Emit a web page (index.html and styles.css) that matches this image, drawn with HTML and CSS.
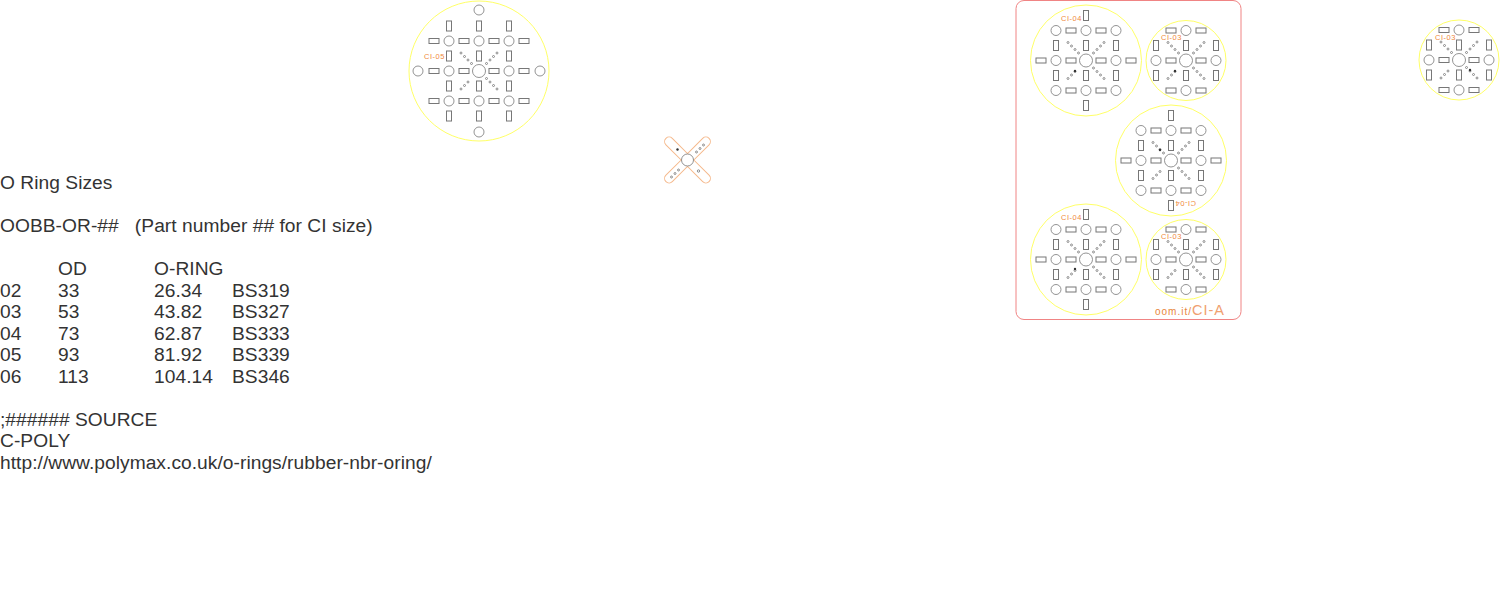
FILE: index.html
```html
<!DOCTYPE html>
<html lang="en">
<head>
  <meta charset="UTF-8">
  <title>O Ring Sizes</title>
  <link rel="stylesheet" href="styles.css">
</head>
<body>
  <svg class="sheet" width="1500" height="597" viewBox="0 0 1500 597" aria-hidden="true">
    <defs>
      <rect id="sh" class="slot" x="-5" y="-2.5" width="10" height="5"/>
      <rect id="sv" class="slot" x="-2.5" y="-5" width="5" height="10"/>
      <circle id="hole" class="hole" r="5"/>

      <!-- small screw holes along the diagonals -->
      <g id="spokes">
        <circle class="pin" cx="-18" cy="-18" r="1"/><circle class="pin" cx="-14.5" cy="-14.5" r="1"/><circle class="pin" cx="-11" cy="-11" r="1"/><circle class="pin" cx="-7.5" cy="-7.5" r="1"/>
        <circle class="pin" cx="18" cy="-18" r="1"/><circle class="pin" cx="14.5" cy="-14.5" r="1"/><circle class="pin" cx="11" cy="-11" r="1"/><circle class="pin" cx="7.5" cy="-7.5" r="1"/>
        <circle class="pin" cx="-18" cy="18" r="1"/><circle class="pin" cx="-14.5" cy="14.5" r="1"/><circle class="pin" cx="-11" cy="11" r="1"/>
        <circle class="pin" cx="18" cy="18" r="1"/><circle class="pin" cx="14.5" cy="14.5" r="1"/><circle class="pin" cx="11" cy="11" r="1"/><circle class="pin" cx="7.5" cy="7.5" r="1"/>
      </g>

      <g id="ci03">
        <use href="#spokes"/>
        <circle class="hole" r="6.5"/>
        <use href="#hole" x="-30"/><use href="#hole" x="30"/><use href="#hole" y="-30"/><use href="#hole" y="30"/>
        <use href="#sh" x="-15"/><use href="#sh" x="15"/>
        <use href="#sh" x="-15" y="-30"/><use href="#sh" x="15" y="-30"/>
        <use href="#sh" x="-15" y="30"/><use href="#sh" x="15" y="30"/>
        <use href="#sv" y="-15"/><use href="#sv" y="15"/>
        <use href="#sv" x="-30" y="-15"/><use href="#sv" x="-30" y="15"/>
        <use href="#sv" x="30" y="-15"/><use href="#sv" x="30" y="15"/>
      </g>

      <g id="ci04">
        <use href="#ci03"/>
        <use href="#hole" x="-30" y="-30"/><use href="#hole" x="30" y="-30"/>
        <use href="#hole" x="-30" y="30"/><use href="#hole" x="30" y="30"/>
        <use href="#sh" x="-45"/><use href="#sh" x="45"/>
        <use href="#sv" y="-45"/><use href="#sv" y="45"/>
      </g>

      <g id="ci05">
        <use href="#ci04"/>
        <use href="#hole" x="-61"/><use href="#hole" x="61"/><use href="#hole" y="-61"/><use href="#hole" y="61"/>
        <use href="#sh" x="-45" y="-30"/><use href="#sh" x="45" y="-30"/>
        <use href="#sh" x="-45" y="30"/><use href="#sh" x="45" y="30"/>
        <use href="#sv" x="-30" y="-45"/><use href="#sv" x="30" y="-45"/>
        <use href="#sv" x="-30" y="45"/><use href="#sv" x="30" y="45"/>
      </g>
    </defs>

    <!-- CI-05 on its own -->
    <g transform="translate(479 71)">
      <circle class="rim" r="70"/>
      <use href="#ci05"/>
    </g>
    <text class="label" x="424" y="59">CI-05</text>

    <!-- cross bracket -->
    <g transform="translate(687.5 160)">
      <path class="bracket" transform="rotate(45)" d="M-4.5-4.5V-26A4.5 4.5 0 0 1 4.5-26V-4.5H26A4.5 4.5 0 0 1 26 4.5H4.5V26A4.5 4.5 0 0 1-4.5 26V4.5H-26A4.5 4.5 0 0 1-26-4.5Z"/>
      <circle class="hole" r="6"/>
      <circle class="pin" cx="9" cy="-8" r="1"/><circle class="pin" cx="12.5" cy="-11.5" r="1"/><circle class="pin" cx="16" cy="-15" r="1"/>
      <circle class="pin" cx="-9" cy="10" r="1"/><circle class="pin" cx="-12.5" cy="13.5" r="1"/><circle class="pin" cx="-16" cy="17" r="1"/>
      <circle class="pin-solid" cx="-10" cy="-10.5" r="1.2"/>
      <circle class="pin" cx="11" cy="11" r="1.2"/>
    </g>

    <!-- CI-A plate -->
    <rect class="plate" x="1016" y="0.5" width="225" height="319" rx="8"/>
    <g transform="translate(1086 60.5)"><circle class="rim" r="55.5"/><use href="#ci04"/></g>
    <g transform="translate(1186 60.5)"><circle class="rim" r="40"/><use href="#ci03"/></g>
    <g transform="translate(1171 160.5)"><circle class="rim" r="55.5"/><use href="#ci04"/></g>
    <g transform="translate(1086 259.5)"><circle class="rim" r="55.5"/><use href="#ci04"/></g>
    <g transform="translate(1186 259.5)"><circle class="rim" r="40"/><use href="#ci03"/></g>
    <circle class="pin-solid" cx="1075" cy="71" r="1.2"/>
    <circle class="pin-solid" cx="1175" cy="71" r="1.2"/>
    <circle class="pin-solid" cx="1160" cy="150" r="1.2"/>
    <circle class="pin-solid" cx="1075" cy="269" r="1.2"/>
    <text class="label" x="1061" y="21">CI-04</text>
    <text class="label" x="1161" y="40">CI-03</text>
    <text class="label" transform="rotate(180 1186 203)" x="1176" y="205.5">CI-04</text>
    <text class="label" x="1061" y="220">CI-04</text>
    <text class="label" x="1161" y="239">CI-03</text>
    <text class="plate-url" x="1155" y="315">oom.it/</text>
    <text class="plate-name" x="1192" y="315">CI-A</text>

    <!-- CI-03 on its own -->
    <g transform="translate(1459 60)"><circle class="rim" r="40"/><use href="#ci03"/></g>
    <circle class="pin-solid" cx="1470" cy="70" r="1.2"/>
    <text class="label" x="1435" y="40">CI-03</text>
  </svg>

  <main class="notes">
    <p>O Ring Sizes</p>
    <p class="part">OOBB-OR-##   (Part number ## for CI size)</p>
    <div class="sizes">
      <span></span><span>OD</span><span>O-RING</span><span></span>
      <span>02</span><span>33</span><span>26.34</span><span>BS319</span>
      <span>03</span><span>53</span><span>43.82</span><span>BS327</span>
      <span>04</span><span>73</span><span>62.87</span><span>BS333</span>
      <span>05</span><span>93</span><span>81.92</span><span>BS339</span>
      <span>06</span><span>113</span><span>104.14</span><span>BS346</span>
    </div>
    <p>;###### SOURCE<br>C-POLY<br>http://www.polymax.co.uk/o-rings/rubber-nbr-oring/</p>
  </main>
</body>
</html>
```

FILE: styles.css
```css
body {
    margin: 0;
    background-color: #fff;
    color: #333;
    font-family: "Liberation Sans", Arial, sans-serif;
    font-size: 19.2px;
    letter-spacing: 0.04px;
    line-height: 21.5px;
    overflow: hidden;
}
.sheet {
    position: absolute;
    top: 0;
    left: 0;
}
.notes {
    padding-top: 172px;
}
.notes p {
    margin: 0 0 21.5px;
}
.part {
    white-space: pre;
}
.sizes {
    display: grid;
    grid-template-columns: 58px 96px 78px 1fr;
    margin-bottom: 21.5px;
}

/* drawing */
.rim {
    fill: none;
    stroke: #ffff66;
    stroke-width: 1;
}
.plate {
    fill: none;
    stroke: #f08484;
    stroke-width: 1;
}
.bracket {
    fill: none;
    stroke: #f5b98c;
    stroke-width: 1;
}
.hole {
    fill: none;
    stroke: #777;
    stroke-width: 0.8;
}
.slot {
    fill: none;
    stroke: #777;
    stroke-width: 1;
}
.pin {
    fill: none;
    stroke: #666;
    stroke-width: 0.7;
}
.pin-solid {
    fill: #333;
}
.label {
    fill: #f08a3c;
    font-size: 7.5px;
    letter-spacing: 0.5px;
}
.plate-url {
    fill: #e8863c;
    font-size: 10px;
    letter-spacing: 1px;
}
.plate-name {
    fill: #f0a070;
    font-size: 14.5px;
    letter-spacing: 1px;
}
```
